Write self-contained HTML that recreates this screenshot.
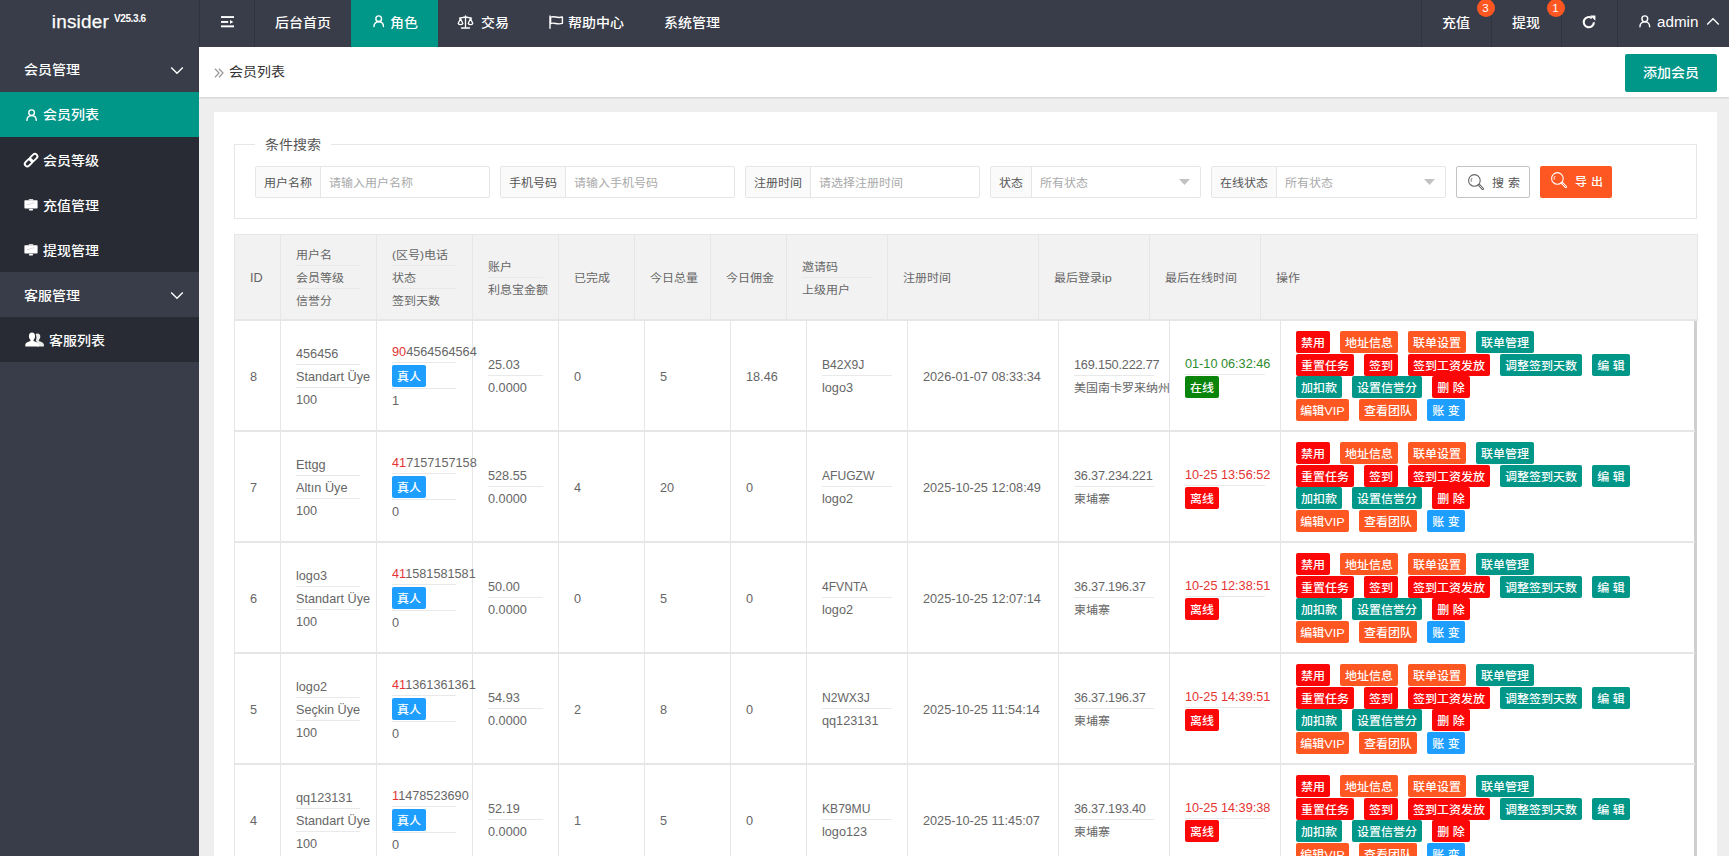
<!DOCTYPE html><html lang="zh-CN"><head><meta charset="utf-8"><title>会员列表</title><style>
*{box-sizing:border-box;margin:0;padding:0}
html,body{width:1729px;height:856px;overflow:hidden}
body{font-family:"Liberation Sans","Noto Sans CJK SC",sans-serif;font-size:14px;background:#eeeeee;color:#333;position:relative;-webkit-font-smoothing:antialiased}
.a{position:absolute}
.t{position:absolute;white-space:nowrap;line-height:22px;height:22px;transform:scaleY(.9);transform-origin:0 50%}
.t.f12{transform:scaleY(.92)}
.t.l,.t.nl{transform:none}
.s{display:inline-block;transform:scaleY(.92)}
.hd{position:absolute;left:0;top:0;width:1729px;height:47px;background:#393d49}
.hd .t{color:#fff;font-size:14px;font-weight:500}
.dv{position:absolute;top:0;width:1px;height:47px;background:#31343f}
.sd{position:absolute;left:0;top:47px;width:199px;height:809px;background:#393d49}
.sd .t{color:#fff;font-size:14px;font-weight:500}
.bar{position:absolute;left:199px;top:47px;width:1530px;height:50px;background:#fff;box-shadow:0 1px 2px rgba(0,0,0,.12)}
.card{position:absolute;left:214px;top:112px;width:1503px;height:760px;background:#fff}
.fs{position:absolute;left:234px;top:144px;width:1463px;height:75px;border:1px solid #e6e6e6}
.grp{position:absolute;top:166px;height:32px;border:1px solid #e6e6e6;border-radius:2px;background:#fff}
.grp .lb{position:absolute;left:0;top:0;height:30px;background:#fafafa;border-right:1px solid #e6e6e6;border-radius:2px 0 0 2px}
.f12{font-size:12px}
.c6{color:#666}
.ph{color:#a9a9a9}
.btn{position:absolute;height:22px;border-radius:2px;color:#fff;font-size:12px;line-height:25.6px;font-weight:500;overflow:hidden;text-align:center;white-space:nowrap}
.r{background:#fb0707}.o{background:#ff5722}.g{background:#009688}.b{background:#1e9fff}.gr{background:#0a840a}
.hr{position:absolute;height:1px;background:#e9e9e9}
.vl{position:absolute;width:1px;background:#e6e6e6}
.hl{position:absolute;height:2px;background:#e6e6e6}
.l{font-size:12.7px}
span.l{position:relative;top:0.3px}
svg{position:absolute;overflow:visible}
</style></head><body>
<div class="hd">
<div class="t nl" style="left:51.7px;top:8.6px;line-height:26px;height:26px;font-size:18.9px;font-weight:400;letter-spacing:0.25px;-webkit-text-stroke:0.25px #fff">insider</div>
<div class="t nl" style="left:114px;top:10.5px;line-height:16px;height:16px;font-size:10px;font-weight:bold;letter-spacing:-0.4px">V25.3.6</div>
<div class="dv" style="left:199px"></div>
<div class="dv" style="left:254px"></div>
<div class="dv" style="left:1421px"></div>
<div class="dv" style="left:1491px"></div>
<div class="dv" style="left:1561px"></div>
<div class="dv" style="left:1617px"></div>
<svg style="left:220px;top:15px" width="15" height="14" viewBox="0 0 15 14"><g fill="#fff"><rect x="1" y="1.1" width="13" height="1.9"/><rect x="1" y="6" width="7.2" height="1.9"/><rect x="1" y="10.4" width="13" height="1.9"/><path d="M10 5.1 L13.400 6.95 L10 8.800 Z"/></g></svg>
<div class="t " style="left:275px;top:10.6px;">后台首页</div>
<div class="a" style="left:351px;top:0;width:87px;height:47px;background:#009688"></div>
<svg style="left:372.7px;top:15.4px" width="11.4" height="12.4" viewBox="0 0 12 13"><g fill="none" stroke="#fff" stroke-width="1.5" stroke-linecap="round"><circle cx="6" cy="3.9" r="3"/><path d="M1 12.2 C1 8.6 3.2 7.1 6 7.1 C8.8 7.1 11 8.6 11 12.2"/></g></svg>
<div class="t " style="left:390px;top:10.6px;">角色</div>
<svg style="left:457px;top:14px" width="17" height="16" viewBox="0 0 17 16"><g fill="none" stroke="#fff" stroke-width="1.3" stroke-linecap="round" stroke-linejoin="round"><path d="M8.5 2 V13.6"/><path d="M4.5 14 H12.5"/><path d="M2.5 4.2 L8.5 3 L14.5 4.2"/><path d="M3.5 4.4 L1.2 9.4 C2 11 5 11 5.8 9.4 Z"/><path d="M13.5 4.4 L11.2 9.4 C12 11 15 11 15.8 9.4 Z"/></g></svg>
<div class="t " style="left:481px;top:10.6px;">交易</div>
<svg style="left:548px;top:14px" width="16" height="16" viewBox="0 0 16 16"><g fill="none" stroke="#fff" stroke-width="1.4" stroke-linecap="round" stroke-linejoin="round"><path d="M2 2 V14.2"/><path d="M2.6 3.2 C6 1.6 9 4.6 14.4 3 V9.4 C9 11 6 8 2.6 9.6 Z"/></g></svg>
<div class="t " style="left:568px;top:10.6px;">帮助中心</div>
<div class="t " style="left:664px;top:10.6px;">系统管理</div>
<div class="t " style="left:1442px;top:10.6px;">充值</div>
<div class="t " style="left:1512px;top:10.6px;">提现</div>
<div class="a" style="left:1476.5px;top:-1px;width:18px;height:18px;border-radius:9px;background:#ff5722;color:#fff;font-size:11.5px;line-height:19px;text-align:center">3</div>
<div class="a" style="left:1546.5px;top:-1px;width:18px;height:18px;border-radius:9px;background:#ff5722;color:#fff;font-size:11.5px;line-height:19px;text-align:center">1</div>
<svg style="left:1582px;top:15px" width="14" height="14" viewBox="0 0 14 14"><path d="M11.9 7.2 A5.1 5.1 0 1 1 9.9 3.1" fill="none" stroke="#fff" stroke-width="2.1"/><path d="M8.2 0.6 H13.4 V5.8 Z" fill="#fff"/></svg>
<svg style="left:1639.4px;top:14.6px" width="11.6" height="12.6" viewBox="0 0 12 13"><g fill="none" stroke="#fff" stroke-width="1.5" stroke-linecap="round"><circle cx="6" cy="3.9" r="3"/><path d="M1 12.2 C1 8.6 3.2 7.1 6 7.1 C8.8 7.1 11 8.6 11 12.2"/></g></svg>
<div class="t l" style="left:1657px;top:11px;font-size:15.2px;font-weight:400">admin</div>
<svg style="left:1706px;top:17px" width="14" height="9" viewBox="0 0 14 9"><path d="M1.2 7.6 L7 1.8 L12.8 7.6" fill="none" stroke="#fff" stroke-width="1.4"/></svg>
</div>
<div class="sd">
<div class="a" style="left:0;top:45px;width:199px;height:180px;background:#282b33"></div>
<div class="a" style="left:0;top:45px;width:199px;height:45px;background:#009688"></div>
<div class="a" style="left:0;top:270px;width:199px;height:45px;background:#282b33"></div>
<div class="t " style="left:24px;top:11.5px;">会员管理</div>
<svg style="left:170px;top:19px" width="14" height="9" viewBox="0 0 14 9"><path d="M1.2 1.4 L7 7.2 L12.8 1.4" fill="none" stroke="#fff" stroke-width="1.4"/></svg>
<svg style="left:25.8px;top:61.8px" width="11.2" height="12.2" viewBox="0 0 12 13"><g fill="none" stroke="#fff" stroke-width="1.5" stroke-linecap="round"><circle cx="6" cy="3.9" r="3"/><path d="M1 12.2 C1 8.6 3.2 7.1 6 7.1 C8.8 7.1 11 8.6 11 12.2"/></g></svg>
<div class="t " style="left:43px;top:56.5px;">会员列表</div>
<svg style="left:23px;top:104.8px" width="16" height="16" viewBox="0 0 16 16"><g fill="none" stroke="#fff" stroke-width="1.9"><rect x="-4.3" y="-2.5" width="8.6" height="5" rx="2.5" transform="translate(5.6 10.6) rotate(-45)"/><rect x="-4.3" y="-2.5" width="8.6" height="5" rx="2.5" transform="translate(10.6 5.6) rotate(-45)"/></g></svg>
<div class="t " style="left:43px;top:101.5px;">会员等级</div>
<svg style="left:24px;top:151.6px" width="14" height="12" viewBox="0 0 14 12"><g fill="#fff"><rect x="0.4" y="1.2" width="13.2" height="8.3" rx="0.7"/><rect x="4.6" y="0" width="4.8" height="1.6" rx="0.8" opacity=".8"/><ellipse cx="7" cy="10.7" rx="2.2" ry="0.9"/></g><path d="M3 5.6 L5 5.4 L7.6 4.4 L10.4 3.6" stroke="#c8c8d0" stroke-width="0.7" fill="none"/></svg>
<div class="t " style="left:43px;top:146.5px;">充值管理</div>
<svg style="left:24px;top:196.6px" width="14" height="12" viewBox="0 0 14 12"><g fill="#fff"><rect x="0.4" y="1.2" width="13.2" height="8.3" rx="0.7"/><rect x="4.6" y="0" width="4.8" height="1.6" rx="0.8" opacity=".8"/><ellipse cx="7" cy="10.7" rx="2.2" ry="0.9"/></g><path d="M3 5.6 L5 5.4 L7.6 4.4 L10.4 3.6" stroke="#c8c8d0" stroke-width="0.7" fill="none"/></svg>
<div class="t " style="left:43px;top:191.5px;">提现管理</div>
<div class="t " style="left:24px;top:236.5px;">客服管理</div>
<svg style="left:170px;top:244px" width="14" height="9" viewBox="0 0 14 9"><path d="M1.2 1.4 L7 7.2 L12.8 1.4" fill="none" stroke="#fff" stroke-width="1.4"/></svg>
<svg style="left:24.5px;top:285.4px" width="19" height="15" viewBox="0 0 19 15"><g fill="#fff"><path d="M12.7 1.4 c1.7 0 2.6 1.3 2.6 3.1 c0 1.5-.6 2.7-1.4 3.4 v1 c2.8.9 5 1.8 5 3.6 v1.9 h-6.5 v-4 l-1.6-1.6 c.4-1 .6-2 .6-3.2 c0-1.6-.3-2.8-.9-3.4 c.5-.5 1.300-.8 2.200-.8 z" opacity=".9"/><path d="M7 0.400 c2 0 3.100 1.600 3.100 3.700 c0 1.700-.7 3.100-1.600 3.900 v1.100 c2.900.8 5.300 1.900 5.300 3.700 v1.600 h-13.500 v-1.600 c0-1.800 2.400-2.900 5.200-3.700 v-1.100 c-.9-.8-1.600-2.200-1.600-3.900 c0-2.100 1.100-3.700 3.100-3.700 z"/></g></svg>
<div class="t " style="left:49px;top:281.5px;">客服列表</div>
</div>
<div class="bar"></div>
<svg style="left:214px;top:68px" width="10" height="10" viewBox="0 0 10 10"><g fill="none" stroke="#999" stroke-width="1.25"><path d="M1 0.800 L5 5 L1 9.200"/><path d="M5 0.800 L9 5 L5 9.200"/></g></svg>
<div class="t " style="left:229px;top:60.5px;color:#333;font-size:14px">会员列表</div>
<div class="a" style="left:1625px;top:54px;width:92px;height:38px;background:#009688;border-radius:2px;color:#fff;font-size:14px;font-weight:500;line-height:37px;text-align:center"><span class="s">添加会员</span></div>
<div class="card"></div>
<div class="fs"></div>
<div class="a" style="left:255px;top:133px;width:76px;height:22px;background:#fff"></div>
<div class="t " style="left:265px;top:133px;font-size:14px;color:#555">条件搜索</div>
<div class="grp" style="left:255px;width:234.5px"><div class="lb" style="width:65px"></div></div>
<div class="t f12" style="left:264px;top:172.2px;color:#555">用户名称</div>
<div class="t f12 ph" style="left:329px;top:172.2px;">请输入用户名称</div>
<div class="grp" style="left:500px;width:234.5px"><div class="lb" style="width:65px"></div></div>
<div class="t f12" style="left:509px;top:172.2px;color:#555">手机号码</div>
<div class="t f12 ph" style="left:574px;top:172.2px;">请输入手机号码</div>
<div class="grp" style="left:745px;width:234.5px"><div class="lb" style="width:65px"></div></div>
<div class="t f12" style="left:754px;top:172.2px;color:#555">注册时间</div>
<div class="t f12 ph" style="left:819px;top:172.2px;">请选择注册时间</div>
<div class="grp" style="left:990px;width:210.5px"><div class="lb" style="width:41px"></div></div>
<div class="t f12" style="left:999px;top:172.2px;color:#555">状态</div>
<div class="t f12 ph" style="left:1040px;top:172.2px;">所有状态</div>
<svg style="left:1179px;top:179px" width="11" height="6" viewBox="0 0 11 6"><path d="M0 0 H11 L5.5 6 Z" fill="#c2c2c2"/></svg>
<div class="grp" style="left:1211px;width:234.5px"><div class="lb" style="width:65px"></div></div>
<div class="t f12" style="left:1220px;top:172.2px;color:#555">在线状态</div>
<div class="t f12 ph" style="left:1285px;top:172.2px;">所有状态</div>
<svg style="left:1424px;top:179px" width="11" height="6" viewBox="0 0 11 6"><path d="M0 0 H11 L5.5 6 Z" fill="#c2c2c2"/></svg>
<div class="a" style="left:1456px;top:166px;width:74px;height:32px;background:#fff;border:1px solid #c4c4c4;border-radius:2px"></div>
<svg style="left:1468px;top:174px" width="16" height="16" viewBox="0 0 16 16"><g fill="none" stroke="#666" stroke-width="1.1"><circle cx="6.4" cy="6.4" r="5.8"/><path d="M3.3 7.6 A3.2 3.2 0 0 1 4.2 4" stroke-width="0.9"/><path d="M11.2 11.2 L14.8 14.8" stroke-width="2.6" stroke-linecap="round"/><path d="M11.6 11.6 L14.6 14.6" stroke="#fff" stroke-width="0.8" stroke-linecap="round"/></g></svg>
<div class="t f12" style="left:1492px;top:171.6px;color:#555;letter-spacing:0.3px">搜 索</div>
<div class="a" style="left:1540px;top:166px;width:72px;height:32px;background:#ff5722;border-radius:2px"></div>
<svg style="left:1551px;top:172.2px" width="16" height="16" viewBox="0 0 16 16"><g fill="none" stroke="#fff" stroke-width="1.1"><circle cx="6.4" cy="6.4" r="5.8"/><path d="M3.3 7.6 A3.2 3.2 0 0 1 4.2 4" stroke-width="0.9"/><path d="M11.2 11.2 L14.8 14.8" stroke-width="2.6" stroke-linecap="round"/><path d="M11.6 11.6 L14.6 14.6" stroke="#ff5722" stroke-width="0.8" stroke-linecap="round"/></g></svg>
<div class="t f12" style="left:1575px;top:170.8px;color:#fff;letter-spacing:0.3px;font-weight:500">导 出</div>
<div class="a" style="left:234px;top:234px;width:1464px;height:86px;background:#f2f2f2;border:1px solid #e6e6e6;border-bottom:0"></div>
<div class="hl" style="left:234px;top:319px;width:1464px"></div>
<div class="vl" style="left:280px;top:235px;height:84px"></div>
<div class="vl" style="left:376px;top:235px;height:84px"></div>
<div class="vl" style="left:472px;top:235px;height:84px"></div>
<div class="vl" style="left:558px;top:235px;height:84px"></div>
<div class="vl" style="left:634px;top:235px;height:84px"></div>
<div class="vl" style="left:710px;top:235px;height:84px"></div>
<div class="vl" style="left:786px;top:235px;height:84px"></div>
<div class="vl" style="left:887px;top:235px;height:84px"></div>
<div class="vl" style="left:1038px;top:235px;height:84px"></div>
<div class="vl" style="left:1149px;top:235px;height:84px"></div>
<div class="vl" style="left:1260px;top:235px;height:84px"></div>
<div class="t c6 l" style="left:250px;top:267.2px;">ID</div>
<div class="t c6 f12" style="left:296px;top:243.5px;">用户名</div>
<div class="hr" style="left:296px;top:265px;width:64px"></div>
<div class="t c6 f12" style="left:296px;top:266.5px;">会员等级</div>
<div class="hr" style="left:296px;top:288px;width:64px"></div>
<div class="t c6 f12" style="left:296px;top:289.5px;">信誉分</div>
<div class="t c6 f12" style="left:392px;top:243.5px;">(区号)电话</div>
<div class="hr" style="left:392px;top:265px;width:64px"></div>
<div class="t c6 f12" style="left:392px;top:266.5px;">状态</div>
<div class="hr" style="left:392px;top:288px;width:64px"></div>
<div class="t c6 f12" style="left:392px;top:289.5px;">签到天数</div>
<div class="t c6 f12" style="left:488px;top:255.7px;">账户</div>
<div class="hr" style="left:488px;top:277px;width:55px"></div>
<div class="t c6 f12" style="left:488px;top:278.7px;">利息宝金额</div>
<div class="t c6 f12" style="left:574px;top:266.5px;">已完成</div>
<div class="t c6 f12" style="left:650px;top:266.5px;">今日总量</div>
<div class="t c6 f12" style="left:726px;top:266.5px;">今日佣金</div>
<div class="t c6 f12" style="left:802px;top:255.7px;">邀请码</div>
<div class="hr" style="left:802px;top:277px;width:70px"></div>
<div class="t c6 f12" style="left:802px;top:278.7px;">上级用户</div>
<div class="t c6 f12" style="left:903px;top:266.5px;">注册时间</div>
<div class="t c6 f12" style="left:1054px;top:266.5px;">最后登录<span class="l">ip</span></div>
<div class="t c6 f12" style="left:1165px;top:266.5px;">最后在线时间</div>
<div class="t c6 f12" style="left:1276px;top:266.5px;">操作</div>
<div class="vl" style="left:234px;top:321px;height:540px"></div>
<div class="a" style="left:1694px;top:321px;width:3px;height:540px;background:#cfcfcf"></div>
<div class="vl" style="left:280px;top:321px;height:540px"></div>
<div class="vl" style="left:376px;top:321px;height:540px"></div>
<div class="vl" style="left:472px;top:321px;height:540px"></div>
<div class="vl" style="left:558px;top:321px;height:540px"></div>
<div class="vl" style="left:644px;top:321px;height:540px"></div>
<div class="vl" style="left:730px;top:321px;height:540px"></div>
<div class="vl" style="left:806px;top:321px;height:540px"></div>
<div class="vl" style="left:907px;top:321px;height:540px"></div>
<div class="vl" style="left:1058px;top:321px;height:540px"></div>
<div class="vl" style="left:1169px;top:321px;height:540px"></div>
<div class="vl" style="left:1280px;top:321px;height:540px"></div>
<div class="hl" style="left:234px;top:430px;width:1461px"></div>
<div class="t c6 l" style="left:250px;top:366.1px;">8</div>
<div class="t c6 l" style="left:296px;top:343.1px;">456456</div>
<div class="hr" style="left:296px;top:364px;width:64px"></div>
<div class="t c6 l" style="left:296px;top:366.1px;">Standart Üye</div>
<div class="hr" style="left:296px;top:387px;width:64px"></div>
<div class="t c6 l" style="left:296px;top:389.1px;">100</div>
<div class="t c6 l" style="left:392px;top:341px;"><span style="color:#e53333">90</span>4564564564</div>
<div class="hr" style="left:392px;top:362px;width:64px"></div>
<div class="btn b" style="left:392px;top:365px;width:34px"><span class="s">真人</span></div>
<div class="hr" style="left:392px;top:388px;width:64px"></div>
<div class="t c6 l" style="left:392px;top:390.1px;">1</div>
<div class="t c6 l" style="left:488px;top:353.7px;">25.03</div>
<div class="hr" style="left:488px;top:375px;width:55px"></div>
<div class="t c6 l" style="left:488px;top:376.7px;">0.0000</div>
<div class="t c6 l" style="left:574px;top:366.1px;">0</div>
<div class="t c6 l" style="left:660px;top:366.1px;">5</div>
<div class="t c6 l" style="left:746px;top:366.1px;">18.46</div>
<div class="t c6 l" style="left:822px;top:353.7px;font-size:12.1px">B42X9J</div>
<div class="hr" style="left:822px;top:375px;width:70px"></div>
<div class="t c6 l" style="left:822px;top:376.7px;">logo3</div>
<div class="t c6 l" style="left:923px;top:366.1px;">2026-01-07 08:33:34</div>
<div class="t c6 l" style="left:1074px;top:353.6px;letter-spacing:-0.2px">169.150.222.77</div>
<div class="hr" style="left:1074px;top:375px;width:80px"></div>
<div class="t c6 f12" style="left:1074px;top:377.3px;">美国南卡罗来纳州</div>
<div class="t l" style="left:1185px;top:353px;color:#2e8b2e">01-10 06:32:46</div>
<div class="hr" style="left:1185px;top:374px;width:80px"></div>
<div class="btn gr" style="left:1185px;top:376px;width:34px"><span class="s">在线</span></div>
<div class="btn r" style="left:1296px;top:331px;width:34px"><span class="s">禁用</span></div>
<div class="btn o" style="left:1340px;top:331px;width:58px"><span class="s">地址信息</span></div>
<div class="btn o" style="left:1408px;top:331px;width:58px"><span class="s">联单设置</span></div>
<div class="btn g" style="left:1476px;top:331px;width:58px"><span class="s">联单管理</span></div>
<div class="btn r" style="left:1296px;top:354px;width:58px"><span class="s">重置任务</span></div>
<div class="btn r" style="left:1364px;top:354px;width:34px"><span class="s">签到</span></div>
<div class="btn r" style="left:1408px;top:354px;width:82px"><span class="s">签到工资发放</span></div>
<div class="btn g" style="left:1500px;top:354px;width:82px"><span class="s">调整签到天数</span></div>
<div class="btn g" style="left:1592px;top:354px;width:38px"><span class="s">编 辑</span></div>
<div class="btn g" style="left:1296px;top:376px;width:46px"><span class="s">加扣款</span></div>
<div class="btn g" style="left:1352px;top:376px;width:70px"><span class="s">设置信誉分</span></div>
<div class="btn r" style="left:1432px;top:376px;width:38px"><span class="s">删 除</span></div>
<div class="btn o" style="left:1296px;top:399px;width:53px"><span class="s">编辑<span class="l">VIP</span></span></div>
<div class="btn o" style="left:1359px;top:399px;width:58px"><span class="s">查看团队</span></div>
<div class="btn b" style="left:1427px;top:399px;width:38px"><span class="s">账 变</span></div>
<div class="hl" style="left:234px;top:541px;width:1461px"></div>
<div class="t c6 l" style="left:250px;top:477.1px;">7</div>
<div class="t c6 l" style="left:296px;top:454.1px;">Ettgg</div>
<div class="hr" style="left:296px;top:475px;width:64px"></div>
<div class="t c6 l" style="left:296px;top:477.1px;">Altın Üye</div>
<div class="hr" style="left:296px;top:498px;width:64px"></div>
<div class="t c6 l" style="left:296px;top:500.1px;">100</div>
<div class="t c6 l" style="left:392px;top:452px;"><span style="color:#e53333">41</span>7157157158</div>
<div class="hr" style="left:392px;top:473px;width:64px"></div>
<div class="btn b" style="left:392px;top:476px;width:34px"><span class="s">真人</span></div>
<div class="hr" style="left:392px;top:499px;width:64px"></div>
<div class="t c6 l" style="left:392px;top:501.1px;">0</div>
<div class="t c6 l" style="left:488px;top:464.7px;">528.55</div>
<div class="hr" style="left:488px;top:486px;width:55px"></div>
<div class="t c6 l" style="left:488px;top:487.7px;">0.0000</div>
<div class="t c6 l" style="left:574px;top:477.1px;">4</div>
<div class="t c6 l" style="left:660px;top:477.1px;">20</div>
<div class="t c6 l" style="left:746px;top:477.1px;">0</div>
<div class="t c6 l" style="left:822px;top:464.7px;font-size:12.1px">AFUGZW</div>
<div class="hr" style="left:822px;top:486px;width:70px"></div>
<div class="t c6 l" style="left:822px;top:487.7px;">logo2</div>
<div class="t c6 l" style="left:923px;top:477.1px;">2025-10-25 12:08:49</div>
<div class="t c6 l" style="left:1074px;top:464.6px;letter-spacing:-0.2px">36.37.234.221</div>
<div class="hr" style="left:1074px;top:486px;width:80px"></div>
<div class="t c6 f12" style="left:1074px;top:488.3px;">柬埔寨</div>
<div class="t l" style="left:1185px;top:464px;color:#e53333">10-25 13:56:52</div>
<div class="hr" style="left:1185px;top:485px;width:80px"></div>
<div class="btn r" style="left:1185px;top:487px;width:34px"><span class="s">离线</span></div>
<div class="btn r" style="left:1296px;top:442px;width:34px"><span class="s">禁用</span></div>
<div class="btn o" style="left:1340px;top:442px;width:58px"><span class="s">地址信息</span></div>
<div class="btn o" style="left:1408px;top:442px;width:58px"><span class="s">联单设置</span></div>
<div class="btn g" style="left:1476px;top:442px;width:58px"><span class="s">联单管理</span></div>
<div class="btn r" style="left:1296px;top:465px;width:58px"><span class="s">重置任务</span></div>
<div class="btn r" style="left:1364px;top:465px;width:34px"><span class="s">签到</span></div>
<div class="btn r" style="left:1408px;top:465px;width:82px"><span class="s">签到工资发放</span></div>
<div class="btn g" style="left:1500px;top:465px;width:82px"><span class="s">调整签到天数</span></div>
<div class="btn g" style="left:1592px;top:465px;width:38px"><span class="s">编 辑</span></div>
<div class="btn g" style="left:1296px;top:487px;width:46px"><span class="s">加扣款</span></div>
<div class="btn g" style="left:1352px;top:487px;width:70px"><span class="s">设置信誉分</span></div>
<div class="btn r" style="left:1432px;top:487px;width:38px"><span class="s">删 除</span></div>
<div class="btn o" style="left:1296px;top:510px;width:53px"><span class="s">编辑<span class="l">VIP</span></span></div>
<div class="btn o" style="left:1359px;top:510px;width:58px"><span class="s">查看团队</span></div>
<div class="btn b" style="left:1427px;top:510px;width:38px"><span class="s">账 变</span></div>
<div class="hl" style="left:234px;top:652px;width:1461px"></div>
<div class="t c6 l" style="left:250px;top:588.1px;">6</div>
<div class="t c6 l" style="left:296px;top:565.1px;">logo3</div>
<div class="hr" style="left:296px;top:586px;width:64px"></div>
<div class="t c6 l" style="left:296px;top:588.1px;">Standart Üye</div>
<div class="hr" style="left:296px;top:609px;width:64px"></div>
<div class="t c6 l" style="left:296px;top:611.1px;">100</div>
<div class="t c6 l" style="left:392px;top:563px;"><span style="color:#e53333">41</span>1581581581</div>
<div class="hr" style="left:392px;top:584px;width:64px"></div>
<div class="btn b" style="left:392px;top:587px;width:34px"><span class="s">真人</span></div>
<div class="hr" style="left:392px;top:610px;width:64px"></div>
<div class="t c6 l" style="left:392px;top:612.1px;">0</div>
<div class="t c6 l" style="left:488px;top:575.7px;">50.00</div>
<div class="hr" style="left:488px;top:597px;width:55px"></div>
<div class="t c6 l" style="left:488px;top:598.7px;">0.0000</div>
<div class="t c6 l" style="left:574px;top:588.1px;">0</div>
<div class="t c6 l" style="left:660px;top:588.1px;">5</div>
<div class="t c6 l" style="left:746px;top:588.1px;">0</div>
<div class="t c6 l" style="left:822px;top:575.7px;font-size:12.1px">4FVNTA</div>
<div class="hr" style="left:822px;top:597px;width:70px"></div>
<div class="t c6 l" style="left:822px;top:598.7px;">logo2</div>
<div class="t c6 l" style="left:923px;top:588.1px;">2025-10-25 12:07:14</div>
<div class="t c6 l" style="left:1074px;top:575.6px;letter-spacing:-0.2px">36.37.196.37</div>
<div class="hr" style="left:1074px;top:597px;width:80px"></div>
<div class="t c6 f12" style="left:1074px;top:599.3px;">柬埔寨</div>
<div class="t l" style="left:1185px;top:575px;color:#e53333">10-25 12:38:51</div>
<div class="hr" style="left:1185px;top:596px;width:80px"></div>
<div class="btn r" style="left:1185px;top:598px;width:34px"><span class="s">离线</span></div>
<div class="btn r" style="left:1296px;top:553px;width:34px"><span class="s">禁用</span></div>
<div class="btn o" style="left:1340px;top:553px;width:58px"><span class="s">地址信息</span></div>
<div class="btn o" style="left:1408px;top:553px;width:58px"><span class="s">联单设置</span></div>
<div class="btn g" style="left:1476px;top:553px;width:58px"><span class="s">联单管理</span></div>
<div class="btn r" style="left:1296px;top:576px;width:58px"><span class="s">重置任务</span></div>
<div class="btn r" style="left:1364px;top:576px;width:34px"><span class="s">签到</span></div>
<div class="btn r" style="left:1408px;top:576px;width:82px"><span class="s">签到工资发放</span></div>
<div class="btn g" style="left:1500px;top:576px;width:82px"><span class="s">调整签到天数</span></div>
<div class="btn g" style="left:1592px;top:576px;width:38px"><span class="s">编 辑</span></div>
<div class="btn g" style="left:1296px;top:598px;width:46px"><span class="s">加扣款</span></div>
<div class="btn g" style="left:1352px;top:598px;width:70px"><span class="s">设置信誉分</span></div>
<div class="btn r" style="left:1432px;top:598px;width:38px"><span class="s">删 除</span></div>
<div class="btn o" style="left:1296px;top:621px;width:53px"><span class="s">编辑<span class="l">VIP</span></span></div>
<div class="btn o" style="left:1359px;top:621px;width:58px"><span class="s">查看团队</span></div>
<div class="btn b" style="left:1427px;top:621px;width:38px"><span class="s">账 变</span></div>
<div class="hl" style="left:234px;top:763px;width:1461px"></div>
<div class="t c6 l" style="left:250px;top:699.1px;">5</div>
<div class="t c6 l" style="left:296px;top:676.1px;">logo2</div>
<div class="hr" style="left:296px;top:697px;width:64px"></div>
<div class="t c6 l" style="left:296px;top:699.1px;">Seçkin Üye</div>
<div class="hr" style="left:296px;top:720px;width:64px"></div>
<div class="t c6 l" style="left:296px;top:722.1px;">100</div>
<div class="t c6 l" style="left:392px;top:674px;"><span style="color:#e53333">41</span>1361361361</div>
<div class="hr" style="left:392px;top:695px;width:64px"></div>
<div class="btn b" style="left:392px;top:698px;width:34px"><span class="s">真人</span></div>
<div class="hr" style="left:392px;top:721px;width:64px"></div>
<div class="t c6 l" style="left:392px;top:723.1px;">0</div>
<div class="t c6 l" style="left:488px;top:686.7px;">54.93</div>
<div class="hr" style="left:488px;top:708px;width:55px"></div>
<div class="t c6 l" style="left:488px;top:709.7px;">0.0000</div>
<div class="t c6 l" style="left:574px;top:699.1px;">2</div>
<div class="t c6 l" style="left:660px;top:699.1px;">8</div>
<div class="t c6 l" style="left:746px;top:699.1px;">0</div>
<div class="t c6 l" style="left:822px;top:686.7px;font-size:12.1px">N2WX3J</div>
<div class="hr" style="left:822px;top:708px;width:70px"></div>
<div class="t c6 l" style="left:822px;top:709.7px;">qq123131</div>
<div class="t c6 l" style="left:923px;top:699.1px;">2025-10-25 11:54:14</div>
<div class="t c6 l" style="left:1074px;top:686.6px;letter-spacing:-0.2px">36.37.196.37</div>
<div class="hr" style="left:1074px;top:708px;width:80px"></div>
<div class="t c6 f12" style="left:1074px;top:710.3px;">柬埔寨</div>
<div class="t l" style="left:1185px;top:686px;color:#e53333">10-25 14:39:51</div>
<div class="hr" style="left:1185px;top:707px;width:80px"></div>
<div class="btn r" style="left:1185px;top:709px;width:34px"><span class="s">离线</span></div>
<div class="btn r" style="left:1296px;top:664px;width:34px"><span class="s">禁用</span></div>
<div class="btn o" style="left:1340px;top:664px;width:58px"><span class="s">地址信息</span></div>
<div class="btn o" style="left:1408px;top:664px;width:58px"><span class="s">联单设置</span></div>
<div class="btn g" style="left:1476px;top:664px;width:58px"><span class="s">联单管理</span></div>
<div class="btn r" style="left:1296px;top:687px;width:58px"><span class="s">重置任务</span></div>
<div class="btn r" style="left:1364px;top:687px;width:34px"><span class="s">签到</span></div>
<div class="btn r" style="left:1408px;top:687px;width:82px"><span class="s">签到工资发放</span></div>
<div class="btn g" style="left:1500px;top:687px;width:82px"><span class="s">调整签到天数</span></div>
<div class="btn g" style="left:1592px;top:687px;width:38px"><span class="s">编 辑</span></div>
<div class="btn g" style="left:1296px;top:709px;width:46px"><span class="s">加扣款</span></div>
<div class="btn g" style="left:1352px;top:709px;width:70px"><span class="s">设置信誉分</span></div>
<div class="btn r" style="left:1432px;top:709px;width:38px"><span class="s">删 除</span></div>
<div class="btn o" style="left:1296px;top:732px;width:53px"><span class="s">编辑<span class="l">VIP</span></span></div>
<div class="btn o" style="left:1359px;top:732px;width:58px"><span class="s">查看团队</span></div>
<div class="btn b" style="left:1427px;top:732px;width:38px"><span class="s">账 变</span></div>
<div class="hl" style="left:234px;top:874px;width:1461px"></div>
<div class="t c6 l" style="left:250px;top:810.1px;">4</div>
<div class="t c6 l" style="left:296px;top:787.1px;">qq123131</div>
<div class="hr" style="left:296px;top:808px;width:64px"></div>
<div class="t c6 l" style="left:296px;top:810.1px;">Standart Üye</div>
<div class="hr" style="left:296px;top:831px;width:64px"></div>
<div class="t c6 l" style="left:296px;top:833.1px;">100</div>
<div class="t c6 l" style="left:392px;top:785px;"><span style="color:#e53333">1</span>1478523690</div>
<div class="hr" style="left:392px;top:806px;width:64px"></div>
<div class="btn b" style="left:392px;top:809px;width:34px"><span class="s">真人</span></div>
<div class="hr" style="left:392px;top:832px;width:64px"></div>
<div class="t c6 l" style="left:392px;top:834.1px;">0</div>
<div class="t c6 l" style="left:488px;top:797.7px;">52.19</div>
<div class="hr" style="left:488px;top:819px;width:55px"></div>
<div class="t c6 l" style="left:488px;top:820.7px;">0.0000</div>
<div class="t c6 l" style="left:574px;top:810.1px;">1</div>
<div class="t c6 l" style="left:660px;top:810.1px;">5</div>
<div class="t c6 l" style="left:746px;top:810.1px;">0</div>
<div class="t c6 l" style="left:822px;top:797.7px;font-size:12.1px">KB79MU</div>
<div class="hr" style="left:822px;top:819px;width:70px"></div>
<div class="t c6 l" style="left:822px;top:820.7px;">logo123</div>
<div class="t c6 l" style="left:923px;top:810.1px;">2025-10-25 11:45:07</div>
<div class="t c6 l" style="left:1074px;top:797.6px;letter-spacing:-0.2px">36.37.193.40</div>
<div class="hr" style="left:1074px;top:819px;width:80px"></div>
<div class="t c6 f12" style="left:1074px;top:821.3px;">柬埔寨</div>
<div class="t l" style="left:1185px;top:797px;color:#e53333">10-25 14:39:38</div>
<div class="hr" style="left:1185px;top:818px;width:80px"></div>
<div class="btn r" style="left:1185px;top:820px;width:34px"><span class="s">离线</span></div>
<div class="btn r" style="left:1296px;top:775px;width:34px"><span class="s">禁用</span></div>
<div class="btn o" style="left:1340px;top:775px;width:58px"><span class="s">地址信息</span></div>
<div class="btn o" style="left:1408px;top:775px;width:58px"><span class="s">联单设置</span></div>
<div class="btn g" style="left:1476px;top:775px;width:58px"><span class="s">联单管理</span></div>
<div class="btn r" style="left:1296px;top:798px;width:58px"><span class="s">重置任务</span></div>
<div class="btn r" style="left:1364px;top:798px;width:34px"><span class="s">签到</span></div>
<div class="btn r" style="left:1408px;top:798px;width:82px"><span class="s">签到工资发放</span></div>
<div class="btn g" style="left:1500px;top:798px;width:82px"><span class="s">调整签到天数</span></div>
<div class="btn g" style="left:1592px;top:798px;width:38px"><span class="s">编 辑</span></div>
<div class="btn g" style="left:1296px;top:820px;width:46px"><span class="s">加扣款</span></div>
<div class="btn g" style="left:1352px;top:820px;width:70px"><span class="s">设置信誉分</span></div>
<div class="btn r" style="left:1432px;top:820px;width:38px"><span class="s">删 除</span></div>
<div class="btn o" style="left:1296px;top:843px;width:53px"><span class="s">编辑<span class="l">VIP</span></span></div>
<div class="btn o" style="left:1359px;top:843px;width:58px"><span class="s">查看团队</span></div>
<div class="btn b" style="left:1427px;top:843px;width:38px"><span class="s">账 变</span></div>
</body></html>
